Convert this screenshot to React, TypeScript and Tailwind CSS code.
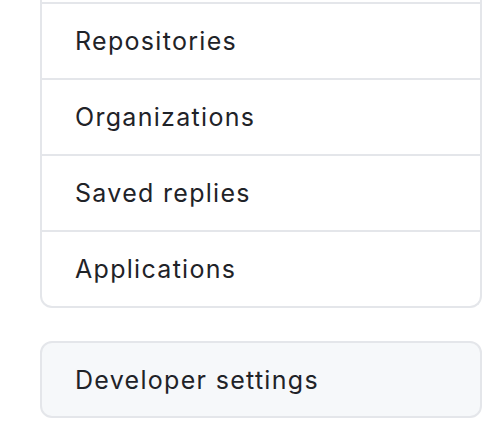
import React from 'react';

const items = ['Repositories', 'Organizations', 'Saved replies', 'Applications'];

export default function App() {
  return (
    <div
      className="w-[504px] h-[440px] bg-white pl-[40px] pr-[22px] text-[#1f2328] text-[25px] tracking-[1.3px]"
      style={{ fontFamily: 'Inter, "Noto Sans", sans-serif' }}
    >
      {/* Settings menu (scrolled, top cut off) */}
      <div className="pt-[2px] border-x-2 border-b-2 border-[#e4e6ea] rounded-b-[12px] overflow-hidden">
        {items.map((item) => (
          <div
            key={item}
            className="h-[76px] border-t-2 border-[#e4e6ea] flex items-center pl-[33px] pt-[2px]"
          >
            {item}
          </div>
        ))}
      </div>

      {/* Developer settings */}
      <div className="mt-[33px] h-[77px] border-2 border-[#e4e6ea] rounded-[12px] bg-[#f6f8fa] flex items-center pl-[33px] pt-[2px]">
        Developer settings
      </div>
    </div>
  );
}
